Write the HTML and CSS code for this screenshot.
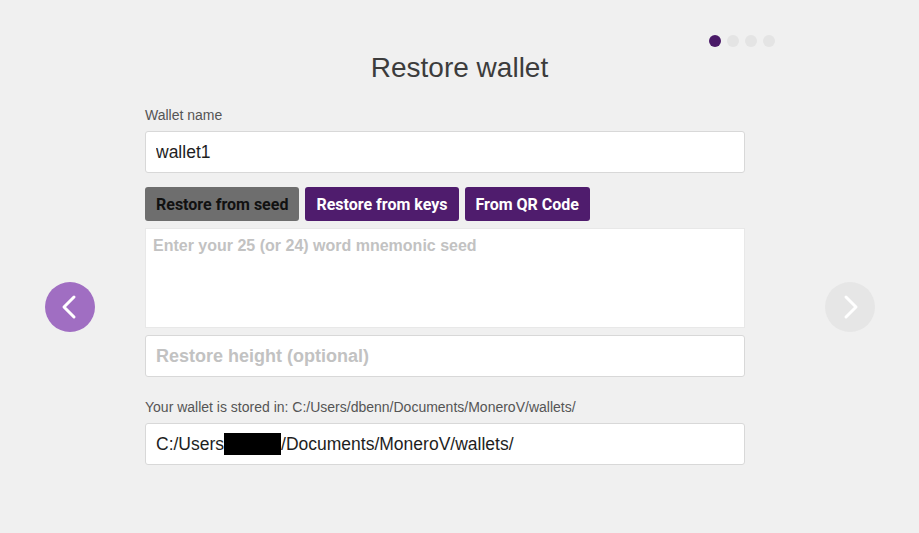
FILE: index.html
```html
<!DOCTYPE html>
<html lang="en">
<head>
    <meta charset="UTF-8">
    <title>Restore wallet</title>
    <link rel="stylesheet" href="styles.css">
</head>
<body>
    <div class="wizard">
        <div class="dots">
            <span class="dot active"></span>
            <span class="dot"></span>
            <span class="dot"></span>
            <span class="dot"></span>
        </div>
        <h1 class="title">Restore wallet</h1>

        <div class="wizard-row">
            <button class="nav-btn prev" title="Back">
                <svg width="22" height="26" viewBox="0 0 22 26" fill="none" stroke="currentColor" stroke-width="3" stroke-linecap="round" stroke-linejoin="round">
                    <polyline points="15,3 5,13 15,23"></polyline>
                </svg>
            </button>

            <div class="form">
                <label class="field-label">Wallet name</label>
                <input class="text-input" type="text" value="wallet1">

                <div class="tabs">
                    <button class="tab selected">Restore from seed</button>
                    <button class="tab">Restore from keys</button>
                    <button class="tab">From QR Code</button>
                </div>

                <textarea class="seed-input" placeholder="Enter your 25 (or 24) word mnemonic seed"></textarea>
                <input class="text-input height-input" type="text" placeholder="Restore height (optional)">

                <label class="field-label stored">Your wallet is stored in: C:/Users/dbenn/Documents/MoneroV/wallets/</label>
                <div class="text-input path-input">C:/Users<span class="redacted"></span>/Documents/MoneroV/wallets/</div>
            </div>

            <button class="nav-btn next" title="Next">
                <svg width="22" height="26" viewBox="0 0 22 26" fill="none" stroke="currentColor" stroke-width="3" stroke-linecap="round" stroke-linejoin="round">
                    <polyline points="7,3 17,13 7,23"></polyline>
                </svg>
            </button>
        </div>
    </div>
</body>
</html>
```

FILE: styles.css
```css
* {
    margin: 0;
    padding: 0;
    box-sizing: border-box;
    font-family: "Liberation Sans", Arial, sans-serif;
}

body {
    background: #f0f0f0;
    width: 919px;
    height: 533px;
    overflow: hidden;
    color: #3c3c3c;
}

.wizard {
    display: flex;
    flex-direction: column;
    padding-top: 35px;
}

.dots {
    display: flex;
    gap: 6px;
    padding-left: 709px;
    height: 12px;
}

.dot {
    width: 12px;
    height: 12px;
    border-radius: 50%;
    background: #e4e4e4;
}

.dot.active {
    background: #4a1a68;
}

.title {
    text-align: center;
    font-size: 28px;
    font-weight: normal;
    color: #3c3c3c;
    margin-top: 2px;
    line-height: 38px;
}

.wizard-row {
    display: grid;
    grid-template-columns: 50px 600px 50px;
    column-gap: 50px;
    padding-left: 45px;
    margin-top: 20px;
}

.wizard-row .next {
    margin-left: 30px;
}

.nav-btn {
    width: 50px;
    height: 50px;
    border-radius: 50%;
    border: none;
    color: #ffffff;
    display: flex;
    align-items: center;
    justify-content: center;
    margin-top: 175px;
    align-self: start;
    cursor: pointer;
}

.prev {
    background: #a06ec2;
}

.next {
    background: #e6e6e6;
}

.form {
    display: flex;
    flex-direction: column;
}

.field-label {
    font-size: 14px;
    color: #555555;
    line-height: 16px;
}

.text-input {
    width: 100%;
    height: 42px;
    margin-top: 8px;
    background: #ffffff;
    border: 1px solid #d8d8d8;
    border-radius: 3px;
    padding: 0 10px;
    font-size: 17.5px;
    color: #1e1e1e;
    display: flex;
    align-items: center;
}

.text-input::placeholder,
.seed-input::placeholder {
    color: #c2c2c2;
    font-weight: bold;
}

.tabs {
    display: flex;
    gap: 6px;
    margin-top: 14px;
}

.tab {
    height: 34px;
    padding: 0 11px;
    border: none;
    border-radius: 3px;
    background: #4f1c6d;
    color: #ffffff;
    font-family: Roboto, "Liberation Sans", sans-serif;
    font-size: 16px;
    font-weight: bold;
    cursor: pointer;
}

.tab.selected {
    background: #6e6e6e;
    color: #111111;
}

.seed-input {
    width: 100%;
    height: 100px;
    margin-top: 7px;
    background: #ffffff;
    border: 1px solid #e8e8e8;
    padding: 8px 7px;
    font-size: 16px;
    resize: none;
}

.height-input {
    margin-top: 7px;
    font-size: 18px;
}

.stored {
    margin-top: 22px;
}

.path-input {
    margin-top: 8px;
}

.redacted {
    display: inline-block;
    width: 57px;
    height: 22px;
    background: #000000;
}
```
